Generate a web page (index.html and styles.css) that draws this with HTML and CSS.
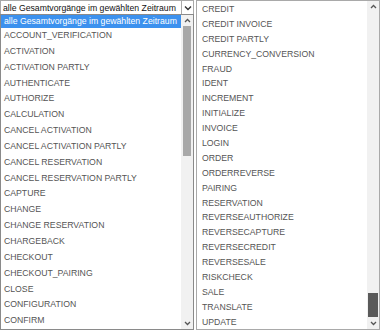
FILE: index.html
```html
<!DOCTYPE html>
<html>
<head>
<meta charset="utf-8">
<link rel="stylesheet" href="styles.css">
</head>
<body>
<div class="page">
  <div class="left">
    <div class="select">
      <span class="select-text">alle Gesamtvorgänge im gewählten Zeitraum</span>
      <span class="select-btn"><svg width="8" height="6" viewBox="0 0 8 6"><path d="M1 1.5 L4 4.5 L7 1.5" fill="none" stroke="#333" stroke-width="1.4"/></svg></span>
    </div>
    <div class="dropdown">
      <ul class="list list-left">
        <li class="sel">alle Gesamtvorgänge im gewählten Zeitraum</li>
        <li>ACCOUNT_VERIFICATION</li>
        <li>ACTIVATION</li>
        <li>ACTIVATION PARTLY</li>
        <li>AUTHENTICATE</li>
        <li>AUTHORIZE</li>
        <li>CALCULATION</li>
        <li>CANCEL ACTIVATION</li>
        <li>CANCEL ACTIVATION PARTLY</li>
        <li>CANCEL RESERVATION</li>
        <li>CANCEL RESERVATION PARTLY</li>
        <li>CAPTURE</li>
        <li>CHANGE</li>
        <li>CHANGE RESERVATION</li>
        <li>CHARGEBACK</li>
        <li>CHECKOUT</li>
        <li>CHECKOUT_PAIRING</li>
        <li>CLOSE</li>
        <li>CONFIGURATION</li>
        <li>CONFIRM</li>
      </ul>
      <div class="sbar">
        <span class="arrow"><svg width="7" height="5" viewBox="0 0 7 5"><path d="M1 4 L3.5 1.5 L6 4" fill="none" stroke="#555" stroke-width="1.3"/></svg></span>
        <div class="track"><div class="thumb thumb-left"></div></div>
        <span class="arrow"><svg width="7" height="5" viewBox="0 0 7 5"><path d="M1 1 L3.5 3.5 L6 1" fill="none" stroke="#555" stroke-width="1.3"/></svg></span>
      </div>
    </div>
  </div>
  <div class="right">
    <ul class="list list-right">
      <li>CREDIT</li>
      <li>CREDIT INVOICE</li>
      <li>CREDIT PARTLY</li>
      <li>CURRENCY_CONVERSION</li>
      <li>FRAUD</li>
      <li>IDENT</li>
      <li>INCREMENT</li>
      <li>INITIALIZE</li>
      <li>INVOICE</li>
      <li>LOGIN</li>
      <li>ORDER</li>
      <li>ORDERREVERSE</li>
      <li>PAIRING</li>
      <li>RESERVATION</li>
      <li>REVERSEAUTHORIZE</li>
      <li>REVERSECAPTURE</li>
      <li>REVERSECREDIT</li>
      <li>REVERSESALE</li>
      <li>RISKCHECK</li>
      <li>SALE</li>
      <li>TRANSLATE</li>
      <li>UPDATE</li>
    </ul>
    <div class="sbar sbar-right">
      <span class="arrow"><svg width="7" height="5" viewBox="0 0 7 5"><path d="M1 4 L3.5 1.5 L6 4" fill="none" stroke="#555" stroke-width="1.3"/></svg></span>
      <div class="track track-right"><div class="thumb thumb-right"></div></div>
      <span class="arrow"><svg width="7" height="5" viewBox="0 0 7 5"><path d="M1 1 L3.5 3.5 L6 1" fill="none" stroke="#555" stroke-width="1.3"/></svg></span>
    </div>
  </div>
</div>
</body>
</html>
```
FILE: styles.css
```css
* { box-sizing: border-box; }
html, body { margin: 0; padding: 0; background: #fff; }
body { font-family: "Liberation Sans", Arial, sans-serif; font-size: 8.7px; color: #555; }
.page { display: flex; gap: 2px; width: 380px; height: 331px; }
.left { width: 194px; display: flex; flex-direction: column; }
.select { height: 14px; display: flex; align-items: center; border: 1px solid #a9a9a9; border-bottom: none; }
.select-text { flex: 1; color: #111; padding-left: 2px; white-space: nowrap; overflow: hidden; }
.select-btn { width: 12px; height: 13px; display: flex; align-items: center; justify-content: center; border-left: 1px solid #a9a9a9; background: #fff; }
.dropdown { height: 316px; display: flex; border: 1px solid #8a8a8a; }
.list { list-style: none; margin: 0; padding: 0; flex: 1; overflow: hidden; }
.list li { white-space: nowrap; }
.list-left li { height: 15.85px; line-height: 15.85px; padding-left: 3px; }
.list-left li.sel { background: #3c91ee; color: #fff; height: 13px; line-height: 13px; }
.sbar { width: 12px; display: flex; flex-direction: column; background: #f1f1f1; }
.arrow { height: 11px; display: flex; align-items: center; justify-content: center; }
.track { flex: 1; }
.thumb-left { margin: 0 2px; height: 130px; background: #a8a8a8; }
.right { flex: 1; display: flex; border: 1px solid #a9a9a9; height: 330px; }
.list-right { padding-top: 1px; }
.list-right li { height: 14.9px; line-height: 14.9px; padding-left: 5px; }
.track-right { display: flex; flex-direction: column; justify-content: flex-end; padding-bottom: 1px; }
.thumb-right { margin: 0 1px; height: 24px; background: #5a5a5a; }
```
